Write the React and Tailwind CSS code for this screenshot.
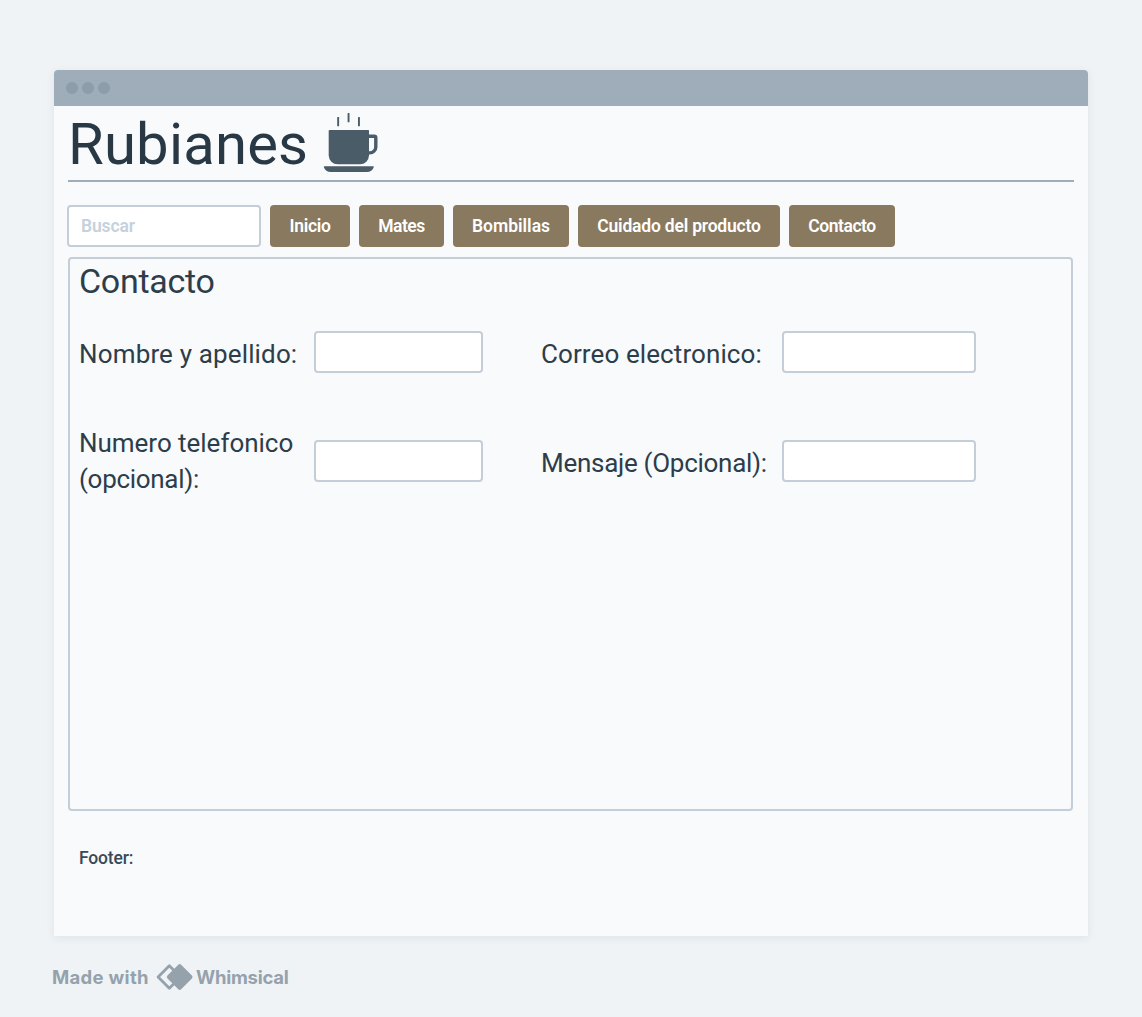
const navItems = [
  { label: "Inicio", width: "w-[80px]", tracking: "tracking-[-0.3px]" },
  { label: "Mates", width: "w-[85px]", tracking: "tracking-[-0.5px]" },
  { label: "Bombillas", width: "w-[116px]", tracking: "tracking-[0px]" },
  { label: "Cuidado del producto", width: "w-[202px]", tracking: "tracking-[-0.2px]" },
  { label: "Contacto", width: "w-[106px]", tracking: "tracking-[-0.45px]" },
];

function CupIcon() {
  return (
    <svg width="58" height="62" viewBox="0 0 58 62" fill="none" aria-hidden="true">
      <g fill="#4b5c69">
        <path d="M7.5 18H46c.6 0 1 .4 1 1v24.300a9 9 0 0 1-9 9H15.700a9 9 0 0 1-9-9V18.800c0-.5.3-.8.8-.8Z" />
        <path d="M2.600 54.200h48.400c.6 0 .9.500.7 1-.9 2.900-3.600 4.800-6.700 4.800H8.600c-3.100 0-5.800-1.900-6.700-4.800-.2-.5.1-1 .7-1Z" />
        <rect x="15.200" y="5" width="1.900" height="9.200" rx="0.5" />
        <rect x="25.600" y="1" width="1.900" height="9.200" rx="0.5" />
        <rect x="36" y="5" width="1.900" height="9.200" rx="0.5" />
      </g>
      <path d="M46 24.300h6.200a1.600 1.600 0 0 1 1.600 1.600v9a6 6 0 0 1-6 6H46" stroke="#4b5c69" strokeWidth="3.400" />
    </svg>
  );
}

function WhimsicalMark() {
  return (
    <svg width="38" height="28" viewBox="0 0 38 28" aria-hidden="true">
      <path d="M13.300 2.700 24.600 14 13.300 25.300 2.100 14Z" fill="none" stroke="#95a2ac" strokeWidth="2.800" strokeLinejoin="round" />
      <path d="M23.700 3.200 34.500 14 23.700 24.800 12.900 14Z" fill="#95a2ac" stroke="#95a2ac" strokeWidth="4" strokeLinejoin="round" />
    </svg>
  );
}

function Label({ children, className = "" }) {
  return <label className={"text-[26px] leading-9 whitespace-nowrap " + className}>{children}</label>;
}

function Field({ className }) {
  return <input className={"h-[42px] rounded-[4px] border-2 border-[#c3ced8] bg-white outline-none " + className} />;
}

export default function App() {
  return (
    <div className="h-[1017px] w-[1142px] overflow-hidden bg-[#eff3f6] pt-[70px] pl-[54px] font-['Roboto',sans-serif] text-[#2d3d4a]">
      <main className="flex h-[866px] w-[1034px] flex-col rounded-t-[4px] bg-[#f8fafb] shadow-[0_2px_8px_rgba(40,56,69,0.08)]">
        <div className="flex h-9 shrink-0 items-center gap-1 rounded-t-[4px] bg-[#9eadb9] pl-3">
          <span className="size-3 rounded-full bg-[#8d9daa]" />
          <span className="size-3 rounded-full bg-[#8d9daa]" />
          <span className="size-3 rounded-full bg-[#8d9daa]" />
        </div>

        <header className="ml-[14px] flex h-[76px] w-[1006px] shrink-0 items-start border-b-2 border-[#9eadb9]">
          <h1 className="h-[74px] w-[254px] text-[58px] leading-[76px] tracking-[0.2px] text-[#293845]">Rubianes</h1>
          <div className="pt-[6px]">
            <CupIcon />
          </div>
        </header>

        <nav className="mt-[23px] ml-[13px] flex h-[42px] shrink-0 gap-[9px] text-[17.5px] font-semibold">
          <input
            placeholder="Buscar"
            className="w-[194px] rounded-[4px] border-2 border-[#c3ced8] bg-white pl-3 tracking-[-0.15px] outline-none placeholder:text-[#c5d1dc]"
          />
          {navItems.map((item) => (
            <button key={item.label} className={"rounded-[4px] bg-[#897a5f] text-center whitespace-nowrap text-white " + item.width + " " + item.tracking}>
              {item.label}
            </button>
          ))}
        </nav>

        <section className="mt-[10px] ml-[14px] h-[554px] w-[1005px] shrink-0 rounded-[4px] border-2 border-[#c3ced8] pt-[3px] pl-[9px]">
          <h2 className="h-[41px] text-[34px] leading-[39px] tracking-[-0.3px]">Contacto</h2>
          <form className="mt-7 grid grid-cols-[235px_227px_241px_194px] items-center gap-y-[52px]">
            <Label className="mt-1 tracking-[0.15px]">Nombre y apellido:</Label>
            <Field className="w-[169px]" />
            <Label className="mt-1 tracking-[0.1px]">Correo electronico:</Label>
            <Field className="w-[194px]" />
            <Label className="tracking-[-0.03px]">
              Numero telefonico
              <br />
              <span className="tracking-[-0.3px]">(opcional):</span>
            </Label>
            <Field className="w-[169px]" />
            <Label className="mt-1 tracking-[-0.28px]">Mensaje (Opcional):</Label>
            <Field className="w-[194px]" />
          </form>
        </section>

        <footer className="mt-[35px] ml-[25px] text-[17.5px] leading-6 font-medium tracking-[-0.15px] text-[#3a4956]">Footer:</footer>
      </main>

      <div className="mt-[27px] -ml-[2px] flex h-7 items-center font-['Inter',sans-serif] text-[18.5px] font-bold text-[#95a2ac]">
        <span className="w-[104px] pt-[2px] tracking-[0.3px] whitespace-nowrap">Made with</span>
        <WhimsicalMark />
        <span className="ml-[2px] pt-[2px] tracking-[-0.25px]">Whimsical</span>
      </div>
    </div>
  );
}
